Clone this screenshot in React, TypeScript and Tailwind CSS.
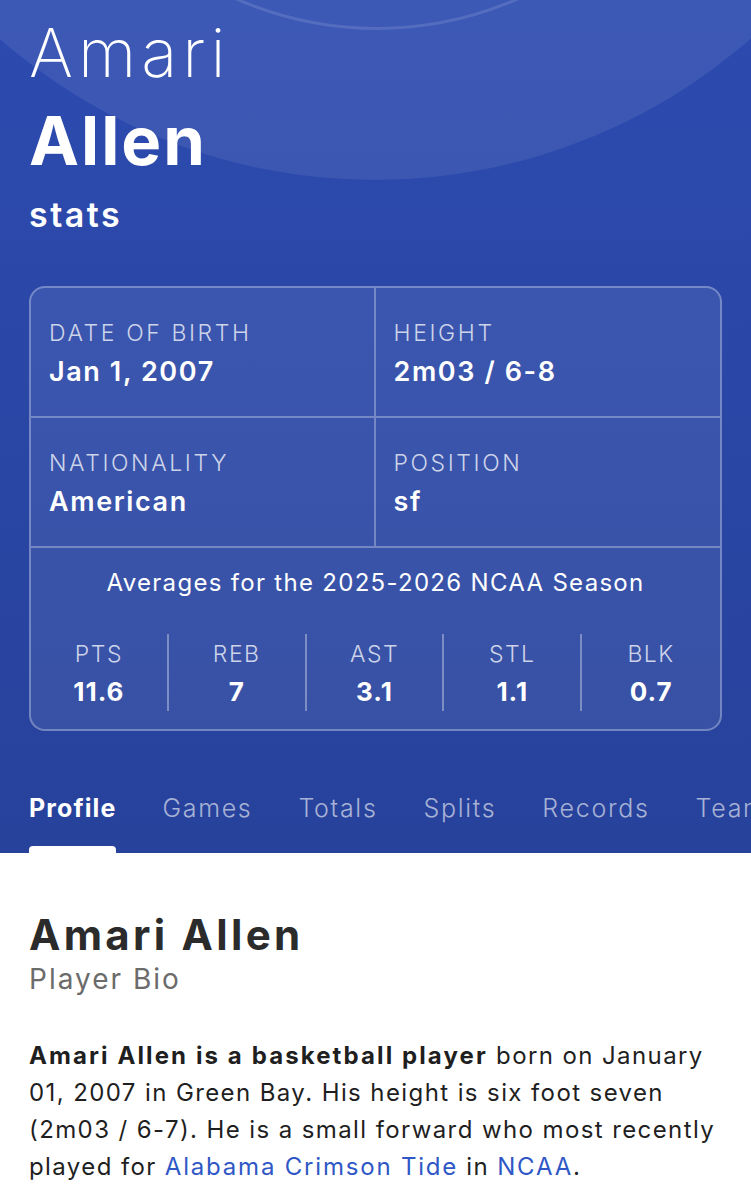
import React from "react";

const font = { fontFamily: "Inter, 'Noto Sans', sans-serif" };

function Cell({ label, value, right }: { label: string; value: string; right?: boolean }) {
  return (
    <div className={`h-[128px] pl-[18px] pt-[30px] ${right ? "" : "border-r-2 border-white/30"}`}>
      <div className="text-[23px] leading-[30px] font-light text-white/75 tracking-[2.6px]">{label}</div>
      <div className="mt-[9px] text-[27px] leading-[30px] font-semibold text-white tracking-[1.6px]">{value}</div>
    </div>
  );
}

function Stat({ label, value, last }: { label: string; value: string; last?: boolean }) {
  return (
    <div className={`flex flex-col items-center h-[77px] pt-[5px] ${last ? "" : "border-r-2 border-white/35"}`}>
      <div className="text-[23px] leading-[30px] font-light text-white/75 tracking-[1.5px]">{label}</div>
      <div className="mt-[8px] text-[26px] leading-[30px] font-bold text-white tracking-[1px]">{value}</div>
    </div>
  );
}

export default function App() {
  const tabs = ["Games", "Totals", "Splits", "Records", "Team"];
  return (
    <div className="w-[751px] min-h-[1200px] bg-white overflow-hidden" style={font}>
      <div className="relative overflow-hidden bg-gradient-to-b from-[#2d4bb0] to-[#27429b]">
        <div className="absolute left-[-195px] top-[-960px] w-[1140px] h-[1140px] rounded-full bg-white/[0.08]" />
        <div className="absolute left-[26px] top-[-672px] w-[702px] h-[702px] rounded-full border-[3px] border-white/[0.12]" />
        <div className="relative px-[29px]">
          <div className="pt-[10px] text-[67px] leading-[86px] font-extralight text-white tracking-[5px]">Amari</div>
          <div className="mt-[10px] text-[67px] leading-[70px] font-bold text-white tracking-[2px]">Allen</div>
          <div className="mt-[17px] text-[34px] leading-[44px] font-semibold text-white tracking-[2.5px]">stats</div>

          <div className="mt-[49px] rounded-[16px] border-2 border-white/30 bg-white/[0.08]">
            <div className="grid grid-cols-2 border-b-2 border-white/30">
              <Cell label="DATE OF BIRTH" value="Jan 1, 2007" />
              <Cell label="HEIGHT" value="2m03 / 6-8" right />
            </div>
            <div className="grid grid-cols-2 border-b-2 border-white/30">
              <Cell label="NATIONALITY" value="American" />
              <Cell label="POSITION" value="sf" right />
            </div>
            <div className="pt-[19px] pb-[18px]">
              <div className="text-center text-[24px] leading-[32px] text-white tracking-[1.3px]">Averages for the 2025-2026 NCAA Season</div>
              <div className="mt-[35px] grid grid-cols-5">
                <Stat label="PTS" value="11.6" />
                <Stat label="REB" value="7" />
                <Stat label="AST" value="3.1" />
                <Stat label="STL" value="1.1" />
                <Stat label="BLK" value="0.7" last />
              </div>
            </div>
          </div>

          <div className="mt-[60px] flex gap-[46px] whitespace-nowrap">
            <div className="flex flex-col">
              <div className="text-[25px] leading-[34px] font-bold text-white tracking-[1.1px]">Profile</div>
              <div className="mt-[21px] h-[7px] rounded-t-[4px] bg-white" />
            </div>
            {tabs.map((t) => (
              <div key={t} className="text-[25px] leading-[34px] font-light text-white/60 tracking-[1.7px]">{t}</div>
            ))}
          </div>
        </div>
      </div>

      <div className="px-[29px] pt-[58px]">
        <div className="text-[42px] leading-[48px] font-bold text-[#2b2b2b] tracking-[3.3px]">Amari Allen</div>
        <div className="text-[28px] leading-[40px] text-[#6b6b6b] tracking-[2px]">Player Bio</div>
        <p className="mt-[38px] text-[24px] leading-[37px] text-[#1f1f1f] tracking-[1.4px] whitespace-nowrap">
          <span className="font-bold tracking-[2.1px]">Amari Allen is a basketball player</span> born on January
          <br />
          01, 2007 in Green Bay. His height is six foot seven
          <br />
          (2m03 / 6-7). He is a small forward who most recently
          <br />
          played for <span className="text-[#2f58c6] tracking-[1.8px]">Alabama Crimson Tide</span> in <span className="text-[#2f58c6] tracking-[1.8px]">NCAA</span>.
        </p>
      </div>
    </div>
  );
}
